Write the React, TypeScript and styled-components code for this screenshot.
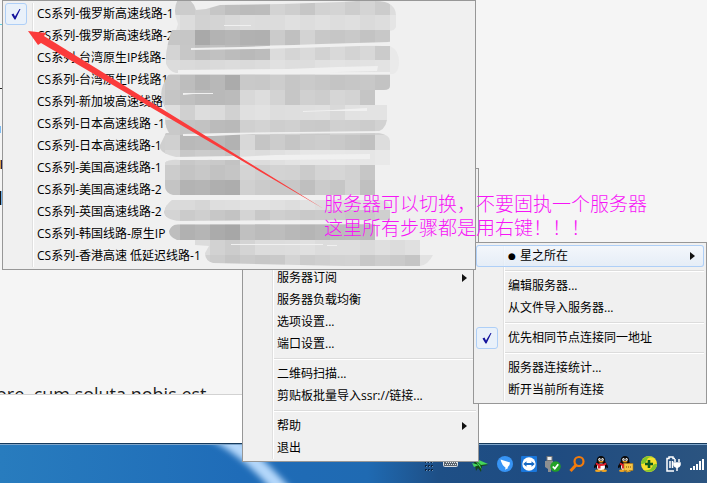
import React from "react";
import styled, { createGlobalStyle, css } from "styled-components";

const Global = createGlobalStyle`
  * { box-sizing: border-box; }
  body { margin: 0; background: #fff; overflow: hidden; }
`;

const uiFont = `"Open Sans", "Noto Sans CJK SC", sans-serif`;

/* ---------- desktop ---------- */

const Desktop = styled.div`
  position: relative;
  display: flex;
  flex-direction: column;
  height: 100vh;
  overflow: hidden;
  font-family: ${uiFont};
`;

const Page = styled.main`
  flex: 1;
  display: flex;
  align-items: flex-end;
  overflow: hidden;
  background: #f5f5f5;
  border-bottom: 1px solid #d2d2d2;
`;

const Paragraph = styled.p`
  margin: 0 0 -12px -4px;
  font-size: 18px;
  line-height: 24px;
  white-space: nowrap;
  color: #1c1c1c;
`;

const Footer = styled.div`
  height: 48px;
  background: #fff;
`;

const Taskbar = styled.footer`
  position: relative;
  height: 40px;
  border-top: 1px solid #163a5c;
  box-shadow: inset 0 1px #7fa6cb;
  background: linear-gradient(to right, #287cbe 0, #1f6cb8 34%, #1f6ab2 52%, #1e4f86 62%, #1f4b80 78%, #2b5480 100%);
`;

const Glare = styled.svg`
  position: absolute;
  left: 190px;
  top: 1px;
`;

const Tray = styled.div`
  position: relative;
  display: flex;
  align-items: center;
  justify-content: flex-end;
  gap: 8px;
  height: 100%;
  padding: 0 2px 0 0;
`;

const TrayButton = styled.button<{ $after?: number }>`
  display: flex;
  width: 16px;
  height: 16px;
  padding: 0;
  border: 0;
  background: none;
  margin-right: ${(p) => p.$after ?? 0}px;
  svg { display: block; overflow: visible; }
`;

/* ---------- menus ---------- */

const Menu = styled.div<{ $left: number; $top: number; $width: number; $lead?: number }>`
  position: absolute;
  left: ${(p) => p.$left}px;
  top: ${(p) => p.$top}px;
  width: ${(p) => p.$width}px;
  padding: ${(p) => p.$lead ?? 2}px 2px 2px;
  border: 1px solid #979797;
  background:
    linear-gradient(to right, transparent 27px, #e0e0e0 27px 28px, #fff 28px 29px, transparent 29px) content-box,
    #f0f0f0;
`;

const rowStyle = css`
  position: relative;
  display: grid;
  grid-template-columns: 32px 1fr 14px;
  align-items: center;
  width: 100%;
  height: 22px;
  padding: 0;
  border: 0;
  background: none;
  font-family: ${uiFont};
  font-size: 12px;
  line-height: 20px;
  text-align: left;
  white-space: nowrap;
  color: #000;
`;

const Item = styled.button<{ $active?: boolean }>`
  ${rowStyle}
  ${(p) =>
    p.$active &&
    css`
      border-radius: 3px;
      box-shadow: inset 0 0 0 1px #aecff7;
      background: linear-gradient(rgba(245, 249, 254, 0.8), rgba(226, 236, 248, 0.8));
    `}
`;

const CheckItem = styled.label`
  ${rowStyle}
`;

const CheckBox = styled.input`
  appearance: none;
  grid-area: 1 / 1;
  width: 22px;
  height: 22px;
  margin: 0;
  border: 1px solid #aecff7;
  border-radius: 3px;
  background: #e9f1fa;
`;

const Tick = styled.svg`
  grid-area: 1 / 1;
  position: relative;
  margin-left: 6px;
`;

const Label = styled.span`
  grid-column: 2;
  display: flex;
  align-items: center;
`;

const Bullet = styled.span`
  width: 12px;
  font-family: "DejaVu Sans", sans-serif;
  font-size: 9px;
`;

const Separator = styled.hr`
  height: 2px;
  margin: 3px 0 3px 29px;
  border: 0;
  border-top: 1px solid #dcdcdc;
  background: #fff;
`;

const Overlay = styled.svg`
  position: absolute;
  left: 0;
  top: 0;
  pointer-events: none;
`;

const Note = styled.p`
  position: absolute;
  left: 324px;
  top: 191px;
  margin: 0;
  font-family: "Noto Sans CJK SC", sans-serif;
  font-size: 19px;
  font-weight: 300;
  line-height: 24px;
  white-space: nowrap;
  color: #f714f7;
`;

const Caret = () => (
  <svg width="6" height="10" viewBox="0 0 6 10">
    <path d="M0 1v8l5-4z" fill="#111" />
  </svg>
);

function MenuItem({ text, sub, active }: { text: string; sub?: boolean; active?: boolean }) {
  return (
    <Item type="button" role="menuitem" $active={active}>
      <Label>
        {active && <Bullet>●</Bullet>}
        {text}
      </Label>
      {sub && <Caret />}
    </Item>
  );
}

function MenuCheck({ text }: { text: string }) {
  return (
    <CheckItem>
      <CheckBox type="checkbox" defaultChecked />
      <Tick width="10" height="12" viewBox="0 0 10 12">
        <path d="M0.5 6.5 2.5 5.5 4 8.5 8.5 1 9.5 1 4.5 11.5 3.5 11.5z" fill="#12129c" />
      </Tick>
      <Label>{text}</Label>
    </CheckItem>
  );
}

/* ---------- pixelated cover over the server addresses ---------- */

const CELL = 15;
const cells = [
  "cc cc d0 c6 be bb bc d3 ce c6 d2 d4 cd d4 cc dd",
  "e2 dc d2 d4 d9 dd dc dc e0 dd e0 dd df da dd e5",
  "c6 c6 a9 b3 b6 b1 b0 cb c0 d3 c8 c6 c9 c3 c8 e8",
  "d4 c7 be c1 bc b9 bc dc d5 da d2 d9 d3 d8 cb e9",
  "dc da d8 da dc da dc e1 de dd e1 e3 e1 e2 e3 ea",
  "c7 bd b3 b8 ab c9 c8 cd c6 ca c7 c4 c6 c8 c3 e8",
  "c5 c0 bb b9 bb d8 dd d3 c6 d0 cd d6 d3 c5 dd f0",
  "de d0 dd db d1 e0 e2 dd de df e0 d9 e2 e3 e3 f0",
  "c9 c4 c2 bb b9 d0 d3 ce d0 ca c9 d0 cf cc d2 f0",
  "d0 b9 bb b9 b2 d8 c5 cc c5 cb cd c9 c5 c0 dd f0",
  "d8 c8 cc c9 c3 de dc e0 e3 e6 e6 e7 e6 e6 e9 f0",
  "cc c4 c8 c2 c5 d4 cf d3 d2 cb d4 d6 d2 c6 f0 f0",
  "c4 b3 b5 af ad d0 cb c8 c8 bf cb c6 d3 c0 f0 f0",
  "da da d6 de df e2 e2 e0 dd e2 de e0 de e2 e0 f0",
  "d4 cb cf c7 c3 d4 c8 cf cc c9 cb cc c8 c9 cf f0",
  "be b1 b5 ab a7 c0 bb bd b8 b5 b9 bb bc bb f0 f0",
  "dc dc dc d2 cc d4 dc dc dd e0 dc de de da df dc e0",
  "d0 d0 d0 cc c5 ca c7 c9 d4 cc cf d2 d3 c8 cd ca c5 e2",
].map((r) => r.split(" "));

const coverShape = [
  "M176 0h14l4 5 2 5 10-1 14-4 62-1 60-2q37-3 46 1 8 4 8 12v12q-2 4-6 4v11l-8 3-60 2-122 5q-28 0-25-18l3-10q-7-16 2-28z",
  "M174 30l10-1 206 0 0 12-30 3-2 2h32q9 4 9 16 0 13-9 12l-206 0q-19 0-18-16 1-16 6-28z",
  "M168 75l5-2h217v13q0 4-6 4h-9v15h12v15q-2 11-12 12l-130 1-76 0q-6-10-2-22-9-14-4-26z",
  "M166 133h213q11 2 11 8v24h-94l-120-8q-18-4-16-12z",
  "M165 163q3-4 15-3h190l5 4v31h-202q-8-2-8-10z",
  "M172 200l208 0q10 1 10 8v12l-210 1q-15-1-16-9 2-8 8-12z",
  "M178 224h197v16h-198q-8-3-8-9 2-6 9-7z",
  "M195 240h225v15h13q-5 10-13 11l-75 0-132-3q-8-2-8-10l4-7-14-1z",
];

const streaks = [
  "M191 48l50-1 80-3 69-2v3l-60 2-70 2-69 1z",
  "M178 70l110-1 50-2 40-1-1 5-80 2-119 0z",
  "M170 73l220-1v2H172z",
  "M224 25h27v1h-27z",
  "M183 93h30v1h-20l-10 1z",
  "M303 111l30-1 34-2v3l-40 0-24 1z",
  "M183 134l40-1 160-2v2l-130 1-40 2-30 0z",
  "M212 158l64-3 94-1v5l-90 1-68 0z",
  "M174 197h216v3H174z",
  "M172 221l218-1v4H172z",
  "M231 244h92v1h-92z M327 245h10v1h-10z",
  "M175 157l60-1v3l-54 1z",
];

const Cover = () => (
  <Overlay width="476" height="270" viewBox="0 0 476 270" aria-hidden="true">
    <defs>
      <clipPath id="cover">
        <path d={coverShape.join("")} />
      </clipPath>
    </defs>
    <g clipPath="url(#cover)" shapeRendering="crispEdges">
      <rect x="155" y="2" width="12" height="265" fill="#cfcfcf" />
      {cells.map((row, y) =>
        row.map((v, x) => (
          <rect key={`${x}-${y}`} x={165 + x * CELL} y={y * CELL} width={CELL} height={CELL} fill={`#${v}${v}${v}`} />
        ))
      )}
    </g>
    <path d={streaks.join("")} fill="#f0f0f0" />
    <path d="M2 0.5H476" stroke="#979797" />
  </Overlay>
);

/* ---------- tray icons ---------- */

const Penguin = ({ bubble }: { bubble?: boolean }) => (
  <svg width="16" height="16" viewBox="0 0 16 16">
    <path d="M8 0C4.8 0 3.6 2.3 3.8 5.5L1 10v2.2l2-1 1 2.3h8l1-2.3 2 1V10l-2.8-4.5C12.4 2.3 11.200 0 8 0z" fill="#0b0b0d" />
    <ellipse cx="8" cy="11" rx="4" ry="3.600" fill="#fff" />
    <ellipse cx="6.500" cy="3.500" rx="1.200" ry="1.500" fill="#fff" />
    <ellipse cx="9.500" cy="3.500" rx="1.200" ry="1.500" fill="#fff" />
    <circle cx="6.800" cy="3.700" r=".5" />
    <circle cx="9.200" cy="3.700" r=".5" />
    <ellipse cx="8" cy="5.800" rx="2.600" ry=".8" fill="#f5a21c" />
    <path d="M3 6.500q5 3 10 0l.5 2q-3 1.500-6 1.500v2.500H5V9.500L2.800 8.500z" fill="#e3202b" />
    <ellipse cx="5" cy="14.800" rx="3" ry="1.300" fill="#f0a422" />
    <ellipse cx="11" cy="14.800" rx="3" ry="1.300" fill="#f0a422" />
    {bubble && <path d="M7 7.500h9v7h-4l-2 2v-2H7z" fill="#f7c548" stroke="#a8730d" strokeWidth=".6" />}
    {bubble && <path d="M9 11h1M11 11h1M13 11h1" stroke="#7a4b00" />}
  </svg>
);

const icons: { name: string; after?: number; art: React.ReactNode }[] = [
  {
    name: "Toolbar grip",
    after: -3,
    art: (
      <svg width="16" height="16" viewBox="0 0 16 16">
        <path d="M4 2h9M4 6h9M4 10h9M4 14h9" stroke="#0d2440" strokeWidth="2" strokeDasharray="2 1" />
        <path d="M5 2.500h9M5 6.500h9M5 10.500h9M5 14.500h9" stroke="#6f94ba" strokeWidth="1" strokeDasharray="1 2" />
      </svg>
    ),
  },
  {
    name: "Keyboard",
    after: 7,
    art: (
      <svg width="16" height="16" viewBox="0 0 16 16">
        <rect x="1.500" y="2.500" width="14" height="8" rx="1" fill="#5c6670" stroke="#d9dde2" />
        <path d="M3 4.500h11M4 6.500h11M3 8.500h11" stroke="#e6e9ec" strokeDasharray="1 1" />
      </svg>
    ),
  },
  {
    name: "Paper plane",
    art: (
      <svg width="16" height="16" viewBox="0 0 16 16">
        <path d="M-1 1 15 9 9 10 8 16 5 12 3 15 2 9z" fill="#134818" />
        <path d="M-1 1 15 8 8 9z M1 3 9 14 7 9z M-1 7 6 9 1 11z" fill="#45d65a" />
      </svg>
    ),
  },
  {
    name: "Messenger",
    art: (
      <svg width="16" height="16" viewBox="0 0 16 16">
        <circle cx="8" cy="8" r="8" fill="#3794f5" />
        <path d="M3.500 3.500 13 6.500q0 3-2.500 5l.8.4-3.300 1.800.6-2Q5 9.500 3.500 3.500z" fill="#fff" />
      </svg>
    ),
  },
  {
    name: "Remote control",
    art: (
      <svg width="16" height="16" viewBox="0 0 16 16">
        <rect width="16" height="16" rx="1" fill="#1976db" />
        <circle cx="8" cy="8" r="6.700" fill="#fff" />
        <path d="M2.200 8 5.500 5.300v1.700h5V5.300L13.800 8l-3.300 2.700V9h-5v1.700z" fill="#1769c4" />
      </svg>
    ),
  },
  {
    name: "Safely remove hardware",
    art: (
      <svg width="16" height="16" viewBox="0 0 16 16">
        <rect x="2" y="0.500" width="5" height="4" fill="#eee" stroke="#777" />
        <path d="M0 5h8v6l-2 2v3H3v-3l-3-2z" fill="#8d8f91" />
        <circle cx="10.500" cy="10.500" r="5.200" fill="#23a127" />
        <path d="M7.800 10.500l2 2.200 3.400-4.500" fill="none" stroke="#fff" strokeWidth="1.800" />
      </svg>
    ),
  },
  {
    name: "Search tool",
    art: (
      <svg width="16" height="16" viewBox="0 0 16 16" fill="none" stroke="#f27b0c">
        <circle cx="10" cy="5.500" r="4.500" strokeWidth="2.200" />
        <path d="M7 9l-5.500 6" strokeWidth="3" />
      </svg>
    ),
  },
  { name: "QQ", art: <Penguin /> },
  { name: "QQ messages", art: <Penguin bubble /> },
  {
    name: "Security",
    art: (
      <svg width="16" height="16" viewBox="0 0 16 16">
        <circle cx="8" cy="8" r="8" fill="#f5e12c" />
        <path d="M0 8a8 8 0 0 1 13-6Q7 0 6 4T0 8zM16 8a8 8 0 0 1-13 6q6 1 8-3t5-3z" fill="#7fc52b" />
        <path d="M8 4v8M4 8h8" stroke="#0c5b20" strokeWidth="2.600" />
      </svg>
    ),
  },
  {
    name: "Power",
    art: (
      <svg width="16" height="16" viewBox="0 0 16 16" fill="none" stroke="#fff" strokeWidth="1.500">
        <path d="M9 15H2V2.500h2V1h4v1.500h2" />
        <path d="M5 5v7M7.500 5v7" />
        <path d="M9 7h6v2q-1 2.500-3 2.500T9 9z" fill="#fff" />
        <path d="M10 6V3M14 6V3M12 11v4" />
      </svg>
    ),
  },
  {
    name: "Network",
    art: (
      <svg width="16" height="16" viewBox="0 0 16 16" fill="#fff">
        <path d="M1 12h2v2H1zM4 10h2v4H4zM7 8h2v6H7zM10 5h2v9h-2zM13 3h2v11h-2z" />
      </svg>
    ),
  },
];

const servers = [
  "CS系列-俄罗斯高速线路-2",
  "CS系列-台湾原生IP线路-",
  "CS系列-台湾原生IP线路1",
  "CS系列-新加坡高速线路",
  "CS系列-日本高速线路 -1",
  "CS系列-日本高速线路-1",
  "CS系列-美国高速线路-1",
  "CS系列-美国高速线路-2",
  "CS系列-英国高速线路-2",
  "CS系列-韩国线路-原生IP",
  "CS系列-香港高速 低延迟线路-1",
];

export default function App() {
  return (
    <>
      <Global />
      <Desktop>
        <Page>
          <Paragraph>ore, cum soluta nobis est</Paragraph>
        </Page>
        <Footer />
        <Taskbar>
          <Glare width="110" height="38" viewBox="0 0 110 38" aria-hidden="true">
            <defs>
              <filter id="soft" x="-20%" y="-20%" width="140%" height="140%">
                <feGaussianBlur stdDeviation="3" />
              </filter>
            </defs>
            <path d="M14-8h34Q78 18 103 46H83Q48 6 14-8z" fill="#b5d8fb" filter="url(#soft)" />
          </Glare>
          <Tray>
            {icons.map((i) => (
              <TrayButton key={i.name} type="button" aria-label={i.name} $after={i.after}>
                {i.art}
              </TrayButton>
            ))}
          </Tray>
        </Taskbar>

        <Overlay width="3" height="210" viewBox="0 0 3 210" aria-hidden="true">
          <path d="M0 24.500h2" stroke="#59cfe0" />
          <path d="M0 88.500h2" stroke="#222" />
          <path d="M0 126h1v7H0z" fill="#7dbdf5" />
          <path d="M0 160h1v9H0z" fill="#d79a45" />
          <path d="M1 160h1v9H1z" fill="#26204a" />
          <path d="M0 191h1v14H0z" fill="#111" />
          <path d="M1 191h1v14H1z" fill="#6fb0ea" />
        </Overlay>

        <Menu role="menu" $left={242} $top={168} $width={237} $lead={98}>
          <MenuItem text="服务器订阅" sub />
          <MenuItem text="服务器负载均衡" />
          <MenuItem text="选项设置..." />
          <MenuItem text="端口设置..." />
          <Separator />
          <MenuItem text="二维码扫描..." />
          <MenuItem text="剪贴板批量导入ssr://链接..." />
          <Separator />
          <MenuItem text="帮助" sub />
          <MenuItem text="退出" />
        </Menu>

        <Menu role="menu" $left={473} $top={242} $width={234}>
          <MenuItem text="星之所在" sub active />
          <Separator />
          <MenuItem text="编辑服务器..." />
          <MenuItem text="从文件导入服务器..." />
          <Separator />
          <MenuCheck text="优先相同节点连接同一地址" />
          <Separator />
          <MenuItem text="服务器连接统计..." />
          <MenuItem text="断开当前所有连接" />
        </Menu>

        <Menu role="menu" $left={2} $top={0} $width={474}>
          <MenuCheck text="CS系列-俄罗斯高速线路-1" />
          {servers.map((s) => (
            <MenuItem key={s} text={s} />
          ))}
        </Menu>

        <Cover />
        <Overlay width="330" height="215" viewBox="0 0 330 215" aria-hidden="true">
          <path d="M28 31 46 33 44 36 324 209 41 43 38 45z" fill="#fb3b3b" />
        </Overlay>
        <Note>
          服务器可以切换，不要固执一个服务器
          <br />
          这里所有步骤都是用右键！！！
        </Note>
      </Desktop>
    </>
  );
}
